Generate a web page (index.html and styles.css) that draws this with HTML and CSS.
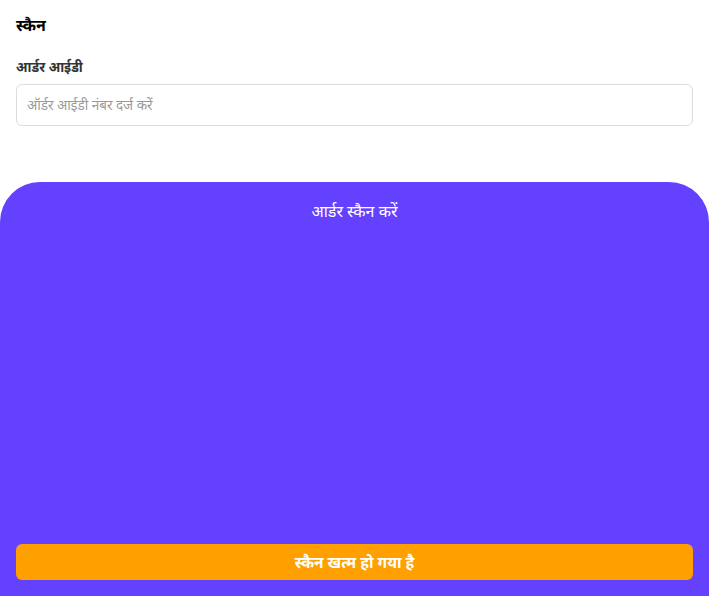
FILE: index.html
```html
<!DOCTYPE html>
<html lang="en">
<head>
<meta charset="utf-8">
<link rel="stylesheet" href="styles.css">
</head>
<body>
<div class="page">
  <section class="form">
    <h1 class="title">स्कैन</h1>
    <label class="label" for="oid">आर्डर आईडी</label>
    <input id="oid" class="input" type="text" placeholder="ऑर्डर आईडी नंबर दर्ज करें">
  </section>
  <section class="scanner">
    <div class="scanner-title">आर्डर स्कैन करें</div>
    <div class="scanner-view"></div>
    <button class="done">स्कैन खत्म हो गया है</button>
  </section>
</div>
</body>
</html>
```
FILE: styles.css
```css
* { box-sizing: border-box; }
html, body { margin: 0; padding: 0; height: 100%; }
body {
  font-family: "Noto Sans", "Liberation Sans", sans-serif;
  background: #fff;
  color: #111;
}
.page {
  display: flex;
  flex-direction: column;
  min-height: 100%;
}
.form {
  display: flex;
  flex-direction: column;
  padding: 14px 16px 0;
}
.title {
  margin: 0;
  font-size: 16px;
  font-weight: 700;
  line-height: 22px;
  color: #000;
}
.label {
  margin-top: 21px;
  font-size: 13.5px;
  font-weight: 700;
  line-height: 20px;
  color: #333;
}
.input {
  margin-top: 7px;
  height: 42px;
  border: 1px solid #dcdcdc;
  border-radius: 6px;
  padding: 0 10px;
  font-family: inherit;
  font-size: 13.5px;
  color: #333;
  outline: none;
}
.input::placeholder { color: #9a9a9a; }
.scanner {
  margin-top: 56px;
  flex: 1;
  background: #6341ff;
  border-radius: 40px 40px 0 0;
  display: flex;
  flex-direction: column;
  padding: 18px 16px 16px;
}
.scanner-title {
  text-align: center;
  color: #fff;
  font-size: 16px;
  line-height: 22px;
}
.scanner-view { flex: 1; }
.done {
  height: 36px;
  border: none;
  border-radius: 6px;
  background: #ffa000;
  color: #fff;
  font-family: inherit;
  font-size: 15.5px;
  font-weight: 700;
}
```
